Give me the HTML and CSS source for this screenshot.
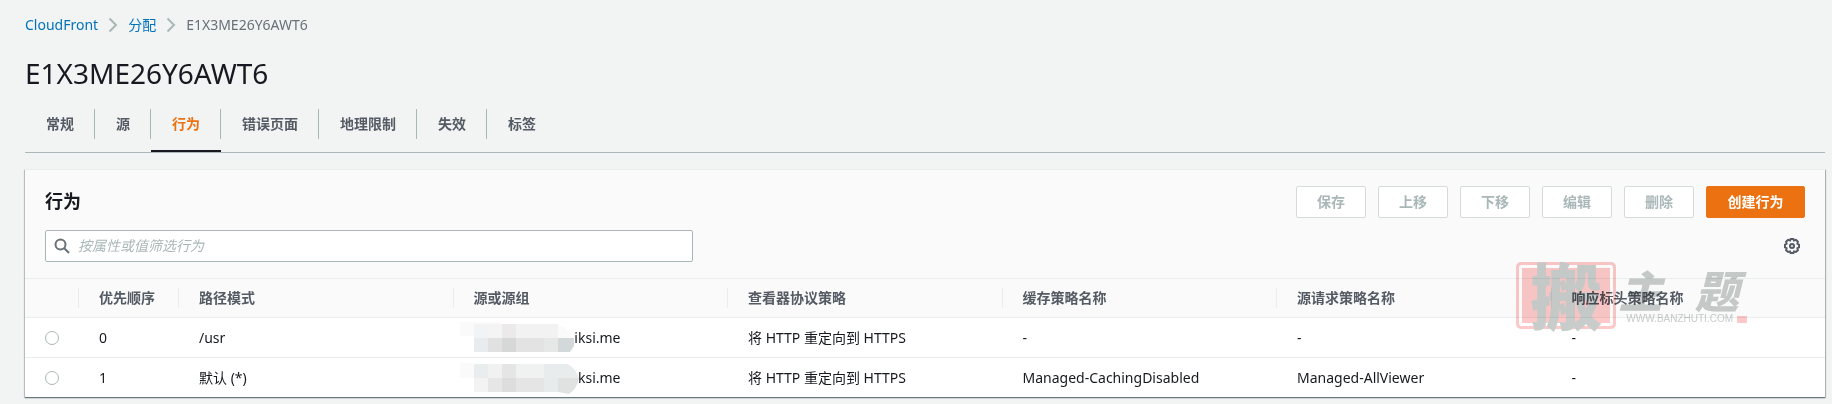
FILE: index.html
```html
<!DOCTYPE html>
<html lang="zh-CN">
<head>
  <meta charset="utf-8" />
  <title>CloudFront - E1X3ME26Y6AWT6</title>
  <link rel="stylesheet" href="styles.css">
</head>
<body>
  <nav class="breadcrumb">
    <a href="#">CloudFront</a>
    <svg class="chevron" width="10" height="16" viewBox="0 0 10 16"><path d="M1.500 1.500 8 8l-6.500 6.500" /></svg>
    <a href="#">分配</a>
    <svg class="chevron" width="10" height="16" viewBox="0 0 10 16"><path d="M1.500 1.500 8 8l-6.500 6.500" /></svg>
    <span>E1X3ME26Y6AWT6</span>
  </nav>

  <h1>E1X3ME26Y6AWT6</h1>

  <nav class="tabs">
    <a href="#"><span>常规</span></a>
    <a href="#"><span>源</span></a>
    <a href="#" class="active"><span>行为</span></a>
    <a href="#"><span>错误页面</span></a>
    <a href="#"><span>地理限制</span></a>
    <a href="#"><span>失效</span></a>
    <a href="#"><span>标签</span></a>
  </nav>

  <main class="card">
    <div class="card-header">
      <div class="title-row">
        <h2>行为</h2>
        <div class="buttons">
          <button disabled>保存</button>
          <button disabled>上移</button>
          <button disabled>下移</button>
          <button disabled>编辑</button>
          <button disabled>删除</button>
          <button class="primary">创建行为</button>
        </div>
      </div>
      <div class="filter-row">
        <label class="search">
          <svg width="16" height="16" viewBox="0 0 16 16"><circle cx="6.500" cy="6.500" r="5" /><path d="M10 10l5 5" /></svg>
          <input type="text" placeholder="按属性或值筛选行为" aria-label="筛选行为">
        </label>
        <button class="settings" aria-label="首选项">
          <svg width="16" height="16" viewBox="0 0 16 16">
            <path d="M6.600 1h2.800l.5 1.500 2.100-.6 1.900 2-.5 1.900 1.600.8v2.800l-1.600.8.5 1.900-1.900 1.900-2-.5-.6 1.500H6.600L6 13.500l-2 .5-1.900-1.900.5-1.900L1 9.400V6.600l1.600-.8-.5-1.900 1.900-2 2.100.6z" />
            <circle cx="8" cy="8" r="2" />
          </svg>
        </button>
      </div>
    </div>

    <table>
      <thead>
        <tr>
          <th class="col-select"></th>
          <th class="col-order"><div>优先顺序</div></th>
          <th><div>路径模式</div></th>
          <th><div>源或源组</div></th>
          <th><div>查看器协议策略</div></th>
          <th><div>缓存策略名称</div></th>
          <th><div>源请求策略名称</div></th>
          <th><div>响应标头策略名称</div></th>
        </tr>
      </thead>
      <tbody>
        <tr>
          <td class="col-select"><input type="radio" name="behavior" aria-label="0 /usr"></td>
          <td>0</td>
          <td>/usr</td>
          <td>
            <div class="origin">
              <svg class="mosaic" width="100" height="32" viewBox="3 0 100 32">
                <path fill="#fafafa" d="M-11 0H30V2H3V14H-11z" />
                <path fill="#f1f3f4" d="M3 2h14v14H3z" />
                <path fill="#f4f4f4" d="M17 2h14v14H17z" />
                <path fill="#ebe9e9" d="M31 2h14v14H31z" />
                <path fill="#f2f2f2" d="M45 2h42v14H45z" />
                <path fill="#fafafa" d="M87 3q12 3 14 13H87z" />
                <path fill="#e8ecee" d="M3 16h14v14H3z" />
                <path fill="#e1e1e1" d="M17 16h14v14H17z" />
                <path fill="#d6d8d8" d="M31 16h14v14H31z" />
                <path fill="#e3e3e3" d="M45 16h28v14H45z" />
                <path fill="#e6e8e8" d="M73 16h14v14H73z" />
                <path fill="#d3d9da" d="M87 16h16v8l-4 6H87z" />
              </svg>
              <span>iksi.me</span>
            </div>
          </td>
          <td>将 HTTP 重定向到 HTTPS</td>
          <td>-</td>
          <td>-</td>
          <td>-</td>
        </tr>
        <tr>
          <td class="col-select"><input type="radio" name="behavior" aria-label="1 默认"></td>
          <td>1</td>
          <td>默认 (*)</td>
          <td>
            <div class="origin">
              <svg class="mosaic" width="104" height="32" viewBox="3 0 104 32">
                <path fill="#fafafa" d="M-11 1H3V16H-11z" />
                <path fill="#e9edee" d="M3 2h14v14H3z" />
                <path fill="#f1f1f1" d="M17 2h14v14H17z" />
                <path fill="#e6e5e5" d="M31 2h14v14H31z" />
                <path fill="#f0f2f2" d="M45 2h28v14H45z" />
                <path fill="#e9ecec" d="M73 2h24q8 5 11 14H73z" />
                <path fill="#f3f3f3" d="M3 16h14v14H3z" />
                <path fill="#e6e6e6" d="M17 16h14v14H17z" />
                <path fill="#dedddd" d="M31 16h14v14H31z" />
                <path fill="#e5e5e5" d="M45 16h28v14H45z" />
                <path fill="#e8ebec" d="M73 16h14v14H73z" />
                <path fill="#e0e2e2" d="M87 16h21q-2 11-10 16l-11-2z" />
              </svg>
              <span>ksi.me</span>
            </div>
          </td>
          <td>将 HTTP 重定向到 HTTPS</td>
          <td>Managed-CachingDisabled</td>
          <td>Managed-AllViewer</td>
          <td>-</td>
        </tr>
      </tbody>
    </table>

    <div class="watermark">
      <div class="seal"><span>搬</span></div>
      <div class="brand">
        <div class="brand-name"><span>主</span><span>题</span></div>
        <div class="brand-url">WWW.BANZHUTI.COM<i></i></div>
      </div>
    </div>
  </main>
</body>
</html>
```
FILE: styles.css
```css
* {
  box-sizing: border-box;
}

body {
  margin: 0;
  padding: 15px 7px 6px 25px;
  background-color: #f2f3f3;
  color: #16191f;
  font-family: "Noto Sans", "Noto Sans CJK SC", sans-serif;
  font-size: 14px;
  line-height: 20px;
}

a {
  text-decoration: none;
}

/* Breadcrumb */
.breadcrumb {
  display: flex;
  align-items: center;
  gap: 10px;
  color: #687078;
}

.breadcrumb a {
  color: #0073bb;
}

.chevron {
  fill: none;
  stroke: #aab7b8;
  stroke-width: 2;
}

h1 {
  margin: 20px 0 18px;
  font-size: 28px;
  font-weight: 400;
  line-height: 36px;
}

/* Tabs */
.tabs {
  display: flex;
  border-bottom: 1px solid #aab7b8;
}

.tabs a {
  padding-bottom: 11px;
  border-bottom: 2px solid transparent;
  color: #545b64;
  font-weight: 700;
}

.tabs span {
  display: block;
  padding: 5px 20px 5px 21px;
  border-right: 1px solid #aab7b8;
}

.tabs a:last-child span {
  border-right: none;
}

.tabs .active {
  border-bottom-color: #16191f;
  color: #ec7211;
}

/* Card */
.card {
  position: relative;
  margin-top: 16px;
  background-color: #fff;
  border-top: 1px solid #eaeded;
  box-shadow: 0 1px 1px 0 #6b7a7c, 1px 1px 1px 0 #b5bdbe, -1px 1px 1px 0 #c5cccd;
}

.card-header {
  padding: 16px 20px;
  background-color: #fafafa;
}

.title-row,
.filter-row {
  display: flex;
  align-items: center;
  justify-content: space-between;
}

.filter-row {
  margin-top: 12px;
}

h2 {
  margin: 0;
  font-size: 18px;
  line-height: 22px;
}

.title-row h2 {
  padding-bottom: 2px;
}

.buttons {
  display: flex;
  gap: 12px;
}

button {
  padding: 5px 20px;
  background-color: #fff;
  border: 1px solid #d5dbdb;
  border-radius: 2px;
  color: #aab7b8;
  font: inherit;
  font-weight: 700;
}

.buttons button {
  min-width: 70px;
}

.buttons .primary {
  background-color: #ec7211;
  border-color: #ec7211;
  color: #fff;
  min-width: 99px;
}

.search {
  display: flex;
  align-items: center;
  gap: 8px;
  width: 100%;
  max-width: 648px;
  height: 32px;
  padding: 0 8px;
  background-color: #fff;
  border: 1px solid #aab7b8;
  border-radius: 2px;
}

.search svg,
.settings svg {
  display: block;
  fill: none;
  stroke: #687078;
  stroke-width: 2;
}

.search input {
  flex: 1;
  padding: 0;
  border: none;
  outline: none;
  background: none;
  font: inherit;
}

.search input::placeholder {
  color: #aab7b8;
  font-style: italic;
}

.settings {
  padding: 0 5px;
  border: none;
  background: none;
}

.settings svg {
  stroke: #545b64;
}

/* Table */
table {
  width: 100%;
  table-layout: fixed;
  border-collapse: separate;
  border-spacing: 0;
}

th,
td {
  height: 40px;
  padding: 0 0 0 20px;
  border-top: 1px solid #eaeded;
  text-align: left;
  white-space: nowrap;
}

th {
  height: 39px;
  padding: 0;
  background-color: #fafafa;
  color: #545b64;
}

th div {
  padding-left: 20px;
  border-left: 1px solid #eaeded;
}

td {
  padding-left: 21px;
}

.col-select {
  width: 53px;
  padding-left: 20px;
}

.col-order {
  width: 100px;
}

input[type="radio"] {
  display: block;
  appearance: none;
  width: 14px;
  height: 14px;
  margin: 0;
  background-color: #fff;
  border: 1px solid #aab7b8;
  border-radius: 50%;
}

.origin {
  display: flex;
  align-items: center;
  justify-content: flex-end;
  width: 147px;
}

.mosaic {
  flex: none;
  overflow: visible;
}

/* Watermark */
.watermark {
  position: absolute;
  top: 92px;
  right: 78px;
  display: flex;
  gap: 2px;
  color: #c8cccb;
  mix-blend-mode: multiply;
  pointer-events: none;
}

.seal {
  display: flex;
  align-items: center;
  justify-content: center;
  width: 100px;
  height: 67px;
  background-color: #fcc8c8;
  border: 3px solid #fcc8c8;
  border-radius: 5px;
  box-shadow: inset 0 0 0 3px #fff;
  font-size: 72px;
  font-weight: 900;
  line-height: 64px;
}

.brand-name {
  display: flex;
  justify-content: space-between;
  padding: 9px 8px 0 0;
  font-size: 44px;
  font-style: italic;
  font-weight: 900;
  line-height: 40px;
}

.brand-url {
  display: flex;
  align-items: center;
  gap: 4px;
  padding-left: 8px;
  font-family: "Liberation Sans", Arial, sans-serif;
  font-size: 10px;
  line-height: 16px;
}

.brand-url i {
  width: 10px;
  height: 7px;
  background-color: #fcc8c8;
}
```
